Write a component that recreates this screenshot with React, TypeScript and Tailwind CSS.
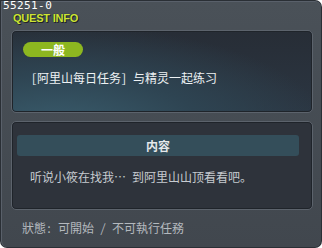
const cjk = "font-['Noto_Sans_Mono_CJK_SC','Noto_Sans_CJK_SC','Noto_Sans_CJK_TC',sans-serif]";
const mono = "font-['DejaVu_Sans_Mono',monospace]";

const QuestInfo = () => {
  return (
    <div className="w-[322px] h-[248px] bg-[#2a2f35] p-px rounded-[7px] rounded-tl-none">
      <div className="relative h-full bg-gradient-to-b from-[#4a5158] to-[#41474e] rounded-[6px] rounded-tl-none border-t border-l border-[#59606a] flex flex-col">
        <span className={`absolute left-[1px] top-[-1px] text-[11px] leading-[10px] tracking-[0.4px] text-white ${mono}`}>
          55251-0
        </span>
        <div className="h-[28px] pl-[11px] pt-[11px]">
          <span className="block text-[11px] leading-[10px] font-bold text-[#cde534] tracking-[-0.2px] [text-shadow:1px_1px_0_#1e2226,0_0_1px_#1e2226] font-['Liberation_Sans',sans-serif]">
            QUEST INFO
          </span>
        </div>

        <div className="ml-[9px] mr-[8px] h-[83px] rounded-[5px] border border-[#5c636c] shadow-[inset_0_0_0_1px_#1f242a] bg-[radial-gradient(ellipse_at_15%_120%,#3a5d6d_0%,#2e4452_40%,transparent_75%),linear-gradient(to_bottom,#272d36,#2b3642)] pl-[11px] pt-[11px]">
          <div
            className={`w-[60px] h-[15px] rounded-full bg-[#8db720] text-white text-[12px] leading-[15px] font-bold text-center ${cjk}`}
          >
            一般
          </div>
          <p className={`mt-[13px] pl-[8px] text-[12px] leading-[16px] text-[#eef2f4] ${cjk}`}>
            [阿里山每日任务] 与精灵一起练习
          </p>
        </div>

        <div className="mt-[8px] ml-[9px] mr-[8px] h-[89px] rounded-[5px] border border-[#5c636c] shadow-[inset_0_0_0_1px_#1f242a] bg-[#2e333b] pl-[5px] pr-[13px] pt-[13px]">
          <div
            className={`h-[21px] rounded-[3px] bg-[#344e5a] text-center text-[12px] leading-[21px] font-bold text-[#e4e8ea] ${cjk}`}
          >
            内容
          </div>
          <p className={`mt-[13px] pl-[13px] text-[12px] leading-[16px] text-[#c6cbd0] ${cjk}`}>
            听说小筱在找我… 到阿里山山顶看看吧。
          </p>
        </div>

        <p className={`mt-[10px] pl-[20px] text-[12px] leading-[16px] text-[#b4b9be] ${cjk}`}>
          狀態: 可開始 / 不可執行任務
        </p>
      </div>
    </div>
  );
};

export default function App() {
  return <QuestInfo />;
}
